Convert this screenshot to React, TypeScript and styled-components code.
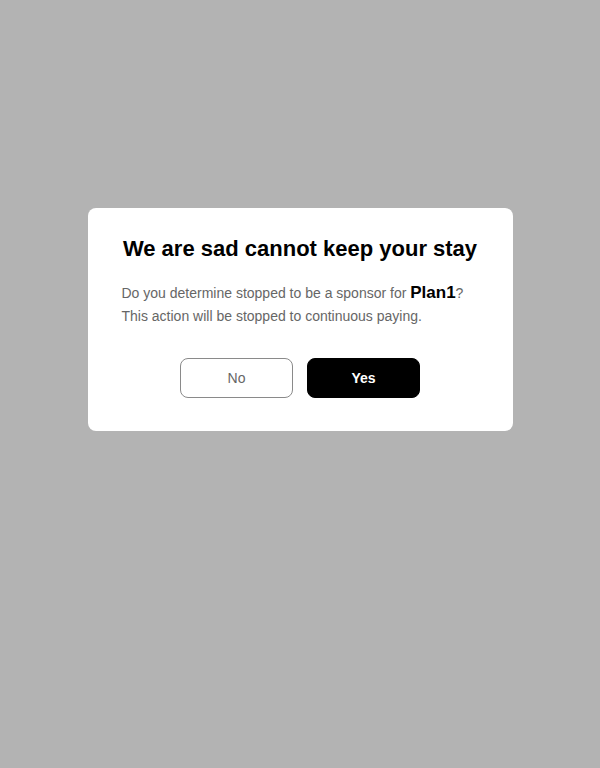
import React from 'react';
import styled, { createGlobalStyle } from 'styled-components';

const GlobalStyle = createGlobalStyle`
  html, body {
    margin: 0;
    padding: 0;
    background: #b3b3b3;
  }
  body {
    font-family: "Liberation Sans", Arial, sans-serif;
  }
`;

const Overlay = styled.div`
  min-height: 768px;
  background: #b3b3b3;
  display: flex;
  justify-content: center;
  align-items: flex-start;
  padding-top: 208px;
  box-sizing: border-box;
`;

const Modal = styled.div`
  width: 425px;
  background: #ffffff;
  border-radius: 8px;
  padding: 27px 34px 33px;
  box-sizing: border-box;
`;

const Title = styled.h2`
  margin: 0;
  font-size: 22px;
  line-height: 28px;
  font-weight: 700;
  color: #000;
  text-align: center;
`;

const Message = styled.p`
  margin: 18px 0 0;
  font-size: 14px;
  line-height: 23px;
  color: #666666;
`;

const PlanName = styled.strong`
  font-size: 17px;
  color: #000;
`;

const Actions = styled.div`
  display: flex;
  justify-content: center;
  gap: 14px;
  margin-top: 30px;
`;

const Button = styled.button<{ $primary?: boolean }>`
  width: 113px;
  height: 40px;
  border-radius: 8px;
  font-family: inherit;
  font-size: 14px;
  cursor: pointer;
  border: 1px solid ${(p) => (p.$primary ? '#000' : '#8a8a8a')};
  background: ${(p) => (p.$primary ? '#000' : '#fff')};
  color: ${(p) => (p.$primary ? '#fff' : '#666')};
  font-weight: ${(p) => (p.$primary ? 700 : 400)};
`;

const App: React.FC = () => {
  return (
    <>
      <GlobalStyle />
      <Overlay>
        <Modal>
          <Title>We are sad cannot keep your stay</Title>
          <Message>
            Do you determine stopped to be a sponsor for <PlanName>Plan1</PlanName>?
            <br />
            This action will be stopped to continuous paying.
          </Message>
          <Actions>
            <Button>No</Button>
            <Button $primary>Yes</Button>
          </Actions>
        </Modal>
      </Overlay>
    </>
  );
};

export default App;
